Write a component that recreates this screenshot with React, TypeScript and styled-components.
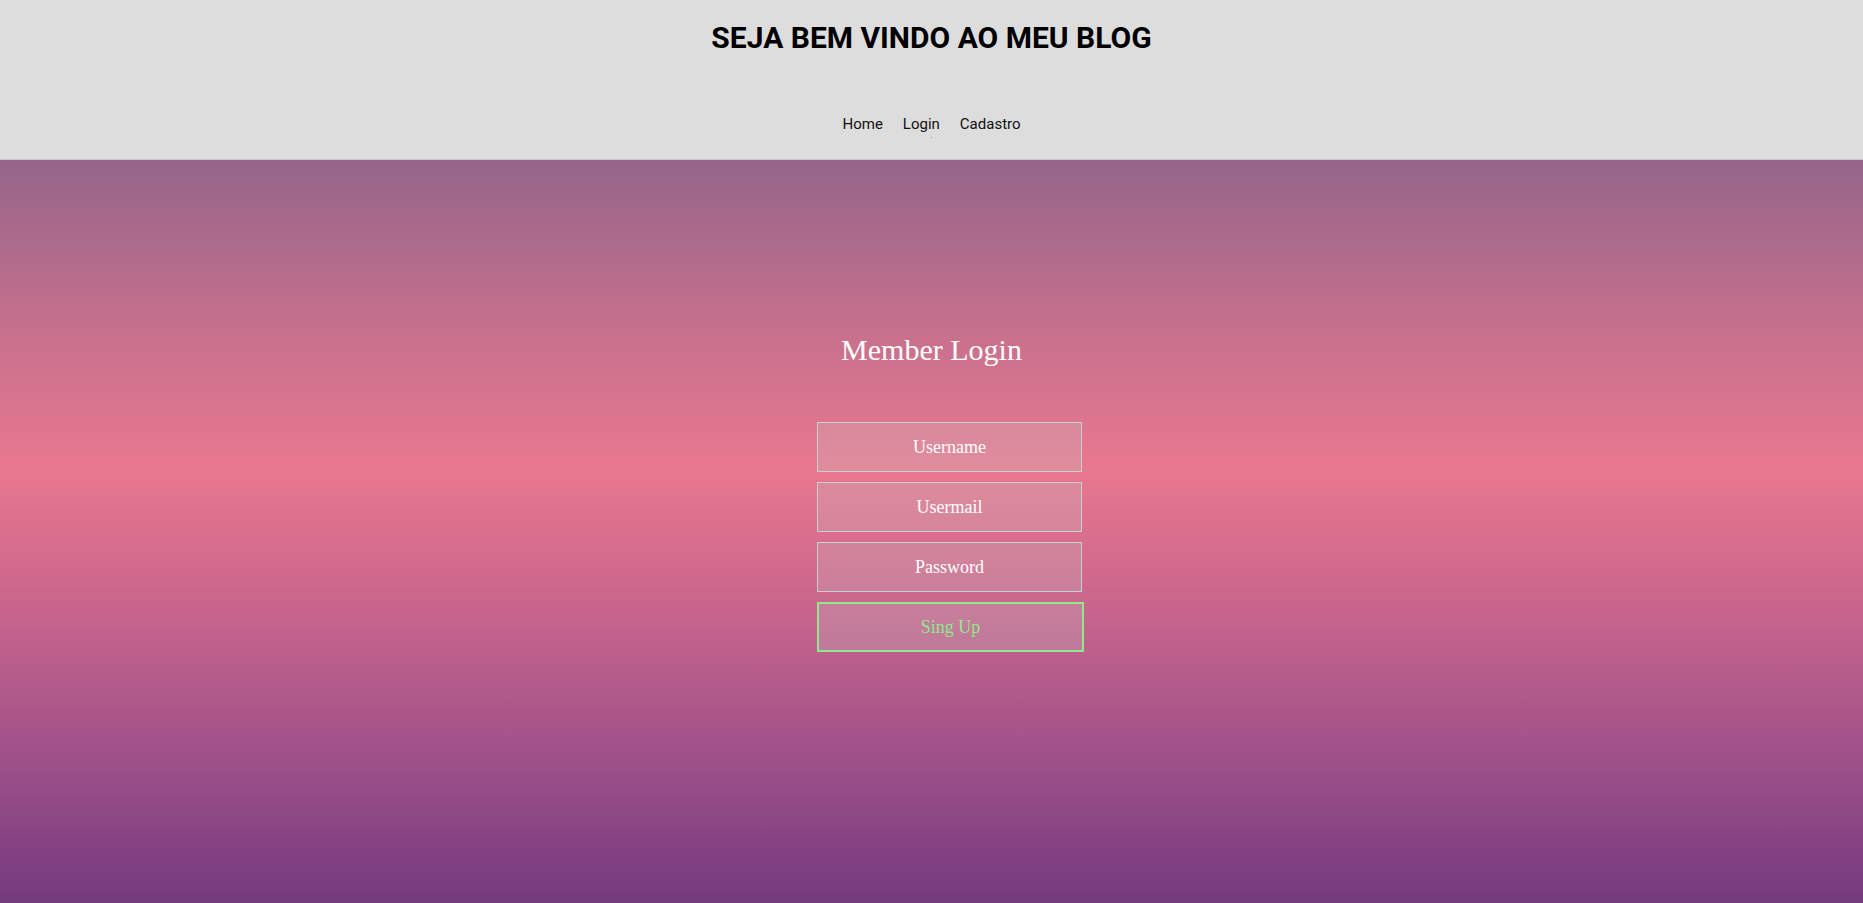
import React from "react";
import styled, { createGlobalStyle } from "styled-components";

const GlobalStyle = createGlobalStyle`
  html, body {
    margin: 0;
    padding: 0;
    height: 100%;
  }
  body {
    font-family: "Liberation Serif", "Times New Roman", serif;
  }
  #root {
    min-height: 100vh;
    display: flex;
    flex-direction: column;
  }
`;

const Header = styled.header`
  height: 160px;
  box-sizing: border-box;
  background: #dddddd;
  border-bottom: 1px solid #c8c8c8;
  display: flex;
  flex-direction: column;
  align-items: center;
  font-family: Roboto, "Liberation Sans", sans-serif;
`;

const Title = styled.h1`
  margin: 20px 0 0;
  font-size: 30px;
  font-weight: 700;
  color: #000;
  line-height: 35px;
`;

const Nav = styled.nav`
  margin-top: 60px;
  display: flex;
  gap: 20px;
`;

const NavLink = styled.a<{ $active?: boolean }>`
  position: relative;
  font-size: 15px;
  line-height: 18px;
  color: #111;
  text-decoration: none;
  cursor: pointer;
  &::after {
    content: "";
    display: ${(p) => (p.$active ? "block" : "none")};
    position: absolute;
    left: 28px;
    top: 22px;
    width: 1px;
    height: 1px;
    background: #9a9a9a;
  }
`;

const Main = styled.main`
  flex: 1;
  background: linear-gradient(
    to bottom,
    #95658a 0%,
    #cb718d 25%,
    #e8788f 41.5%,
    #c9658c 60%,
    #a4538a 78%,
    #743a7e 100%
  );
  display: flex;
  flex-direction: column;
  align-items: center;
`;

const FormTitle = styled.h2`
  margin: 173px 0 0;
  font-size: 30px;
  font-weight: 400;
  line-height: 34px;
  color: #fff;
`;

const Form = styled.form`
  margin-top: 55px;
  padding-left: 38px;
  display: flex;
  flex-direction: column;
  gap: 10px;
`;

const Field = styled.input`
  box-sizing: border-box;
  width: 265px;
  height: 50px;
  margin: 0;
  padding: 0 10px;
  border: 1px solid #c6d1cf;
  background: rgba(200, 200, 200, 0.25);
  color: #fff;
  font-family: "Liberation Serif", "Times New Roman", serif;
  font-size: 18px;
  text-align: center;
  outline: none;
  &::placeholder {
    color: #fff;
    opacity: 1;
  }
`;

const Submit = styled.button`
  box-sizing: border-box;
  width: 267px;
  height: 50px;
  margin: 0;
  border: 2px solid #8fea8c;
  background: rgba(200, 200, 200, 0.25);
  color: #8fe98c;
  font-family: "Liberation Serif", "Times New Roman", serif;
  font-size: 18px;
  cursor: pointer;
`;

export default function App() {
  return (
    <>
      <GlobalStyle />
      <Header>
        <Title>SEJA BEM VINDO AO MEU BLOG</Title>
        <Nav>
          <NavLink>Home</NavLink>
          <NavLink $active>Login</NavLink>
          <NavLink>Cadastro</NavLink>
        </Nav>
      </Header>
      <Main>
        <FormTitle>Member Login</FormTitle>
        <Form onSubmit={(e) => e.preventDefault()}>
          <Field type="text" placeholder="Username" />
          <Field type="email" placeholder="Usermail" />
          <Field type="password" placeholder="Password" />
          <Submit type="submit">Sing Up</Submit>
        </Form>
      </Main>
    </>
  );
}
